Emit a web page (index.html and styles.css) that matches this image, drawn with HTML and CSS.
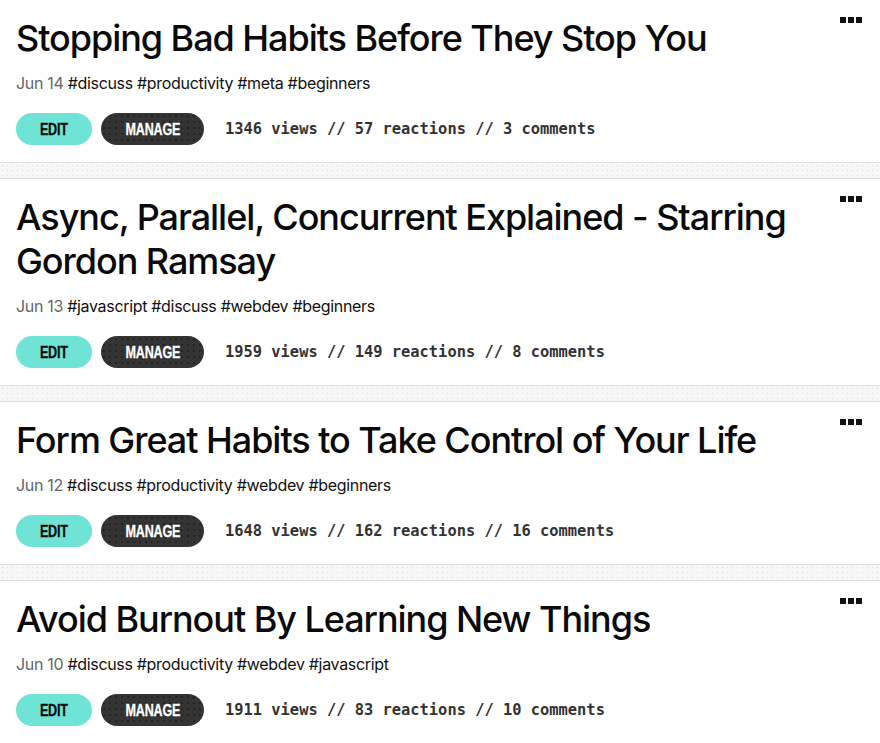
FILE: index.html
```html
<!DOCTYPE html>
<html>
<head>
<meta charset="utf-8">
<link rel="stylesheet" href="styles.css">
</head>
<body>
<div class="list">
  <div class="card">
    <div class="head">
      <h2 class="title">Stopping Bad Habits Before They Stop You</h2>
      <button class="more"><span></span><span></span><span></span></button>
    </div>
    <div class="meta"><span class="date">Jun 14</span> #discuss #productivity #meta #beginners</div>
    <div class="actions">
      <a class="btn edit"><span class="label">EDIT</span></a>
      <a class="btn manage"><span class="label">MANAGE</span></a>
      <span class="stats">1346 views // 57 reactions // 3 comments</span>
    </div>
  </div>
  <div class="sep"></div>
  <div class="card">
    <div class="head">
      <h2 class="title">Async, Parallel, Concurrent Explained - Starring Gordon Ramsay</h2>
      <button class="more"><span></span><span></span><span></span></button>
    </div>
    <div class="meta"><span class="date">Jun 13</span> #javascript #discuss #webdev #beginners</div>
    <div class="actions">
      <a class="btn edit"><span class="label">EDIT</span></a>
      <a class="btn manage"><span class="label">MANAGE</span></a>
      <span class="stats">1959 views // 149 reactions // 8 comments</span>
    </div>
  </div>
  <div class="sep"></div>
  <div class="card">
    <div class="head">
      <h2 class="title">Form Great Habits to Take Control of Your Life</h2>
      <button class="more"><span></span><span></span><span></span></button>
    </div>
    <div class="meta"><span class="date">Jun 12</span> #discuss #productivity #webdev #beginners</div>
    <div class="actions">
      <a class="btn edit"><span class="label">EDIT</span></a>
      <a class="btn manage"><span class="label">MANAGE</span></a>
      <span class="stats">1648 views // 162 reactions // 16 comments</span>
    </div>
  </div>
  <div class="sep"></div>
  <div class="card">
    <div class="head">
      <h2 class="title">Avoid Burnout By Learning New Things</h2>
      <button class="more"><span></span><span></span><span></span></button>
    </div>
    <div class="meta"><span class="date">Jun 10</span> #discuss #productivity #webdev #javascript</div>
    <div class="actions">
      <a class="btn edit"><span class="label">EDIT</span></a>
      <a class="btn manage"><span class="label">MANAGE</span></a>
      <span class="stats">1911 views // 83 reactions // 10 comments</span>
    </div>
  </div>
  <div class="sep"></div>
</div>
</body>
</html>
```
FILE: styles.css
```css
* { box-sizing: border-box; }
html, body { margin: 0; padding: 0; background: #fff; }
body { font-family: "Inter", "Liberation Sans", sans-serif; color: #0a0a0a; }
.list { display: flex; flex-direction: column; }
.card { padding: 16px 18px 17px 16px; background: #fff; }
.head { display: flex; align-items: flex-start; justify-content: space-between; gap: 20px; }
.title { margin: 0; font-size: 36px; line-height: 44px; font-weight: 500; letter-spacing: -1.05px; color: #0a0a0a; }
.more { display: flex; gap: 2px; padding: 0; margin-top: 1px; border: 0; background: none; flex-shrink: 0; }
.more span { width: 6px; height: 6px; background: #111; display: block; }
.meta { margin-top: 11px; font-size: 16px; line-height: 24px; color: #111; letter-spacing: -0.32px; }
.date { color: #666; }
.actions { display: flex; align-items: center; margin-top: 18px; }
.btn { height: 32px; border-radius: 16px; display: flex; align-items: center; justify-content: center; font-family: "Liberation Sans", "Arial", sans-serif; font-weight: 700; font-size: 17px; line-height: 1; }
.label { display: inline-block; transform: scaleX(0.74); letter-spacing: -0.3px; -webkit-text-stroke: 0.3px currentColor; }
.edit { width: 76px; background: #6ee3d6; color: #0a0a0a; }
.manage { width: 103px; margin-left: 9px; color: #fff; background-color: #343434; background-image: radial-gradient(#121212 0.6px, transparent 0.8px); background-size: 6px 6px; }
.stats { margin-left: 21px; font-family: "DejaVu Sans Mono", "Liberation Mono", monospace; font-weight: 700; font-size: 15.4px; color: #333; }
.sep { height: 17px; border-top: 1px solid #ddd; border-bottom: 1px solid #ddd; background-color: #f7f7f7; background-image: radial-gradient(#dcdcdc 0.6px, transparent 0.7px); background-size: 5px 5px; }
```
